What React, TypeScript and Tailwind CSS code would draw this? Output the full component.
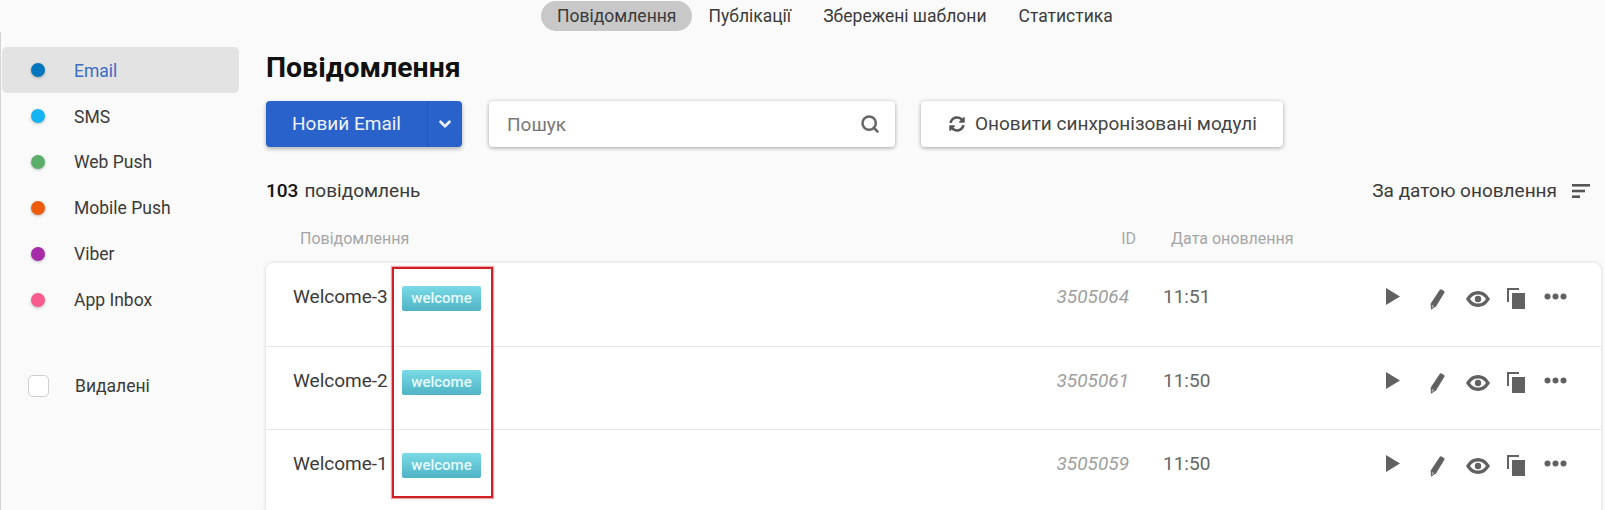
import { ChevronDown, Search } from "lucide-react";
import { FaSyncAlt } from "react-icons/fa";

const channels = [
  { name: "Email", dot: "bg-[#0277bd]", active: true },
  { name: "SMS", dot: "bg-[#12b5f2]" },
  { name: "Web Push", dot: "bg-[#5aae6a]" },
  { name: "Mobile Push", dot: "bg-[#ef5c0c]" },
  { name: "Viber", dot: "bg-[#a52ba8]" },
  { name: "App Inbox", dot: "bg-[#f85c8e]" },
];

const tabs = ["Повідомлення", "Публікації", "Збережені шаблони", "Статистика"];

const messages = [
  { name: "Welcome-3", id: "3505064", time: "11:51" },
  { name: "Welcome-2", id: "3505061", time: "11:50" },
  { name: "Welcome-1", id: "3505059", time: "11:50" },
];

function RowIcons() {
  return (
    <div className="flex items-start text-[#616161]">
      {/* play */}
      <svg width="14" height="17" viewBox="0 0 14 17" className="ml-[1px] mt-[2px]">
        <path d="M0 0 L14 8.5 L0 17 Z" fill="currentColor" />
      </svg>
      {/* pencil */}
      <svg width="15" height="21" viewBox="0 0 15 21" className="ml-[30px] mt-[3px]">
        <path d="M9.8 0.8 Q10.6 0 11.6 0.5 L14 2.1 Q14.9 2.8 14.4 3.8 L6 17.4 L1 20.8 L0.6 14.8 Z" fill="currentColor" />
        <path d="M1.8 15.6 L4.6 17.4 L1.8 19.2 Z" fill="#ffffff" opacity="0.45" />
      </svg>
      {/* eye */}
      <svg width="24" height="16" viewBox="0 0 24 16" className="ml-[21px] mt-[5px]">
        <path
          d="M12 0 C6.5 0 2.5 3.6 0 8 C2.5 12.4 6.5 16 12 16 C17.5 16 21.5 12.4 24 8 C21.5 3.6 17.5 0 12 0 Z M12 3.4 C15.6 3.4 18.4 5.4 20 8 C18.4 10.6 15.6 12.6 12 12.6 C8.4 12.6 5.6 10.6 4 8 C5.6 5.4 8.4 3.4 12 3.4 Z"
          fill="currentColor"
          fillRule="evenodd"
        />
        <circle cx="12" cy="8" r="3.2" fill="currentColor" />
      </svg>
      {/* copy */}
      <svg width="18" height="21" viewBox="0 0 18 21" className="ml-[17px] mt-[2px]">
        <path d="M0 0 H12 V2 H2 V14 H0 Z" fill="currentColor" />
        <rect x="5" y="5" width="13" height="16" fill="currentColor" />
      </svg>
      {/* more */}
      <svg width="23" height="7" viewBox="0 0 23 7" className="ml-[19px] mt-[7px]">
        <circle cx="3.5" cy="3.5" r="3" fill="currentColor" />
        <circle cx="11.5" cy="3.5" r="3" fill="currentColor" />
        <circle cx="19.5" cy="3.5" r="3" fill="currentColor" />
      </svg>
    </div>
  );
}

export default function App() {
  return (
    <div className="relative h-[510px] overflow-hidden bg-[#fafafa] font-['Roboto',sans-serif] text-[17.5px] text-[#3a3a3a]">
      {/* Top tabs */}
      <nav className="flex h-[32px] pl-[541px] pt-[1px]">
        {tabs.map((t, i) => (
          <span
            key={t}
            className={`flex h-[30px] items-center rounded-full px-[16px] ${i === 0 ? "bg-[#c8c8c8]" : ""}`}
          >
            {t}
          </span>
        ))}
      </nav>

      <div className="flex">
        {/* Sidebar */}
        <aside className="h-[478px] w-[266px] shrink-0 border-l-[1px] border-[#d4d4d4] pt-[15px]">
          {channels.map((c, i) => (
            <div
              key={c.name}
              className={`ml-[1px] flex h-[46px] w-[237px] items-center rounded-[5px] pl-[29px] ${c.active ? "bg-[#e3e3e3]" : ""}`}
            >
              <span className={`h-[14px] w-[14px] rounded-full shadow-[0_1px_3px_rgba(0,0,0,0.25)] ${c.dot}`} />
              <span className={`ml-[29px] ${i < 2 ? "pt-[2px]" : ""} ${c.active ? "text-[#3d6cc4]" : ""}`}>{c.name}</span>
            </div>
          ))}
          <div className="ml-[1px] mt-[40px] flex h-[46px] items-center pl-[26px]">
            <span className="h-[22px] w-[21px] rounded-[5px] border border-[#cfcfcf] bg-white" />
            <span className="ml-[26px]">Видалені</span>
          </div>
        </aside>

        {/* Main */}
        <main className="min-w-0 flex-1 pr-[4px]">
          <h1 className="mt-[18px] h-[36px] text-[28.4px] font-bold leading-[36px] text-[#111]">Повідомлення</h1>

          <div className="mt-[15px] flex h-[46px] items-stretch text-[19px]">
            <div className="flex w-[196px] rounded-[4px] bg-[#2a62cb] text-[#eef3fb] shadow-[0_2px_4px_rgba(0,0,0,0.3)]">
              <span className="flex flex-1 items-center justify-center">Новий Email</span>
              <span className="flex w-[35px] items-center justify-center border-l border-[#2458b8]">
                <ChevronDown size={18} strokeWidth={3.5} />
              </span>
            </div>
            <div className="ml-[27px] flex w-[406px] items-center justify-between rounded-[4px] bg-white pl-[18px] pr-[15px] text-[#777] shadow-[0_1px_4px_rgba(0,0,0,0.35)]">
              <span className="pt-[2px]">Пошук</span>
              <Search size={20} strokeWidth={3} className="text-[#666]" />
            </div>
            <div className="ml-[26px] flex w-[362px] items-center rounded-[4px] bg-white pl-[28px] text-[#444] shadow-[0_1px_4px_rgba(0,0,0,0.35)]">
              <FaSyncAlt size={16} className="text-[#555]" />
              <span className="ml-[10px]">Оновити синхронізовані модулі</span>
            </div>
          </div>

          <div className="mt-[32px] flex h-[24px] items-center justify-between pr-[11px] text-[19px]">
            <span>
              <span className="font-medium text-[#111]">103</span>
              <span className="ml-[6px]">повідомлень</span>
            </span>
            <span className="flex items-center">
              За датою оновлення
              <svg width="18" height="14" viewBox="0 0 18 14" className="ml-[15px] text-[#555]">
                <rect width="18" height="2.6" y="0" fill="currentColor" />
                <rect width="13" height="2.6" y="5.7" fill="currentColor" />
                <rect width="8" height="2.6" y="11.4" fill="currentColor" />
              </svg>
            </span>
          </div>

          <div className="mt-[25px] flex h-[20px] items-center pt-[1px] text-[16px] text-[#a6a6a6]">
            <span className="ml-[34px]">Повідомлення</span>
            <span className="ml-[712px]">ID</span>
            <span className="ml-[35px]">Дата оновлення</span>
          </div>

          <div className="mt-[15px] rounded-t-[8px] bg-white shadow-[0_0_4px_rgba(0,0,0,0.15)]">
            {messages.map((m, i) => (
              <div
                key={m.id}
                className={`flex h-[83px] items-start pt-[23px] ${i > 0 ? "border-t border-[#e8e8e8]" : ""}`}
              >
                <span className="ml-[27px] w-[109px] text-[19px] leading-[22px]">{m.name}</span>
                <span className="flex h-[25px] w-[79px] items-center justify-center rounded-[2px] bg-gradient-to-b from-[#7adbe6] to-[#4fb3c6] text-[15px] font-medium text-[#e6fafc]">
                  welcome
                </span>
                <span className="ml-[567px] w-[81px] text-right text-[19px] italic leading-[22px] text-[#9e9e9e]">
                  {m.id}
                </span>
                <span className="ml-[34px] w-[222px] text-[19px] leading-[22px] text-[#666]">{m.time}</span>
                <RowIcons />
              </div>
            ))}
          </div>
        </main>
      </div>

      {/* Red annotation frame */}
      <div className="absolute left-[392px] top-[267px] h-[231px] w-[101px] border-2 border-[#cf1f27] shadow-[0_0_1px_1px_rgba(207,31,39,0.4)]" />
    </div>
  );
}
